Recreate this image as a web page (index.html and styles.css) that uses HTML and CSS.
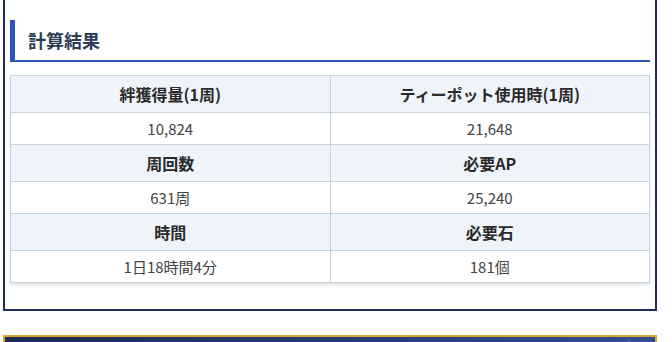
FILE: index.html
```html
<!DOCTYPE html>
<html lang="ja">
<head>
<meta charset="utf-8">
<link rel="stylesheet" href="styles.css">
</head>
<body>
<section class="panel">
  <h2 class="panel-title">計算結果</h2>
  <table class="result">
    <tr class="head"><th>絆獲得量(1周)</th><th>ティーポット使用時(1周)</th></tr>
    <tr class="val"><td>10,824</td><td>21,648</td></tr>
    <tr class="head"><th>周回数</th><th>必要AP</th></tr>
    <tr class="val"><td>631周</td><td>25,240</td></tr>
    <tr class="head"><th>時間</th><th>必要石</th></tr>
    <tr class="val"><td>1日18時間4分</td><td>181個</td></tr>
  </table>
</section>
<div class="next-bar"><span class="deco"></span></div>
</body>
</html>
```
FILE: styles.css
```css
html, body {
  margin: 0;
  padding: 0;
  background: #ffffff;
}
body {
  font-family: "Noto Sans CJK JP", "Noto Sans", sans-serif;
  padding: 0 15px 0 3px;
}
.panel {
  width: 654px;
  box-sizing: border-box;
  border: 2px solid #1f2d5a;
  border-top: none;
  padding: 20px 5px 26px;
}
.panel-title {
  margin: 0;
  height: 40px;
  line-height: 40px;
  border-left: 5px solid #2c55b6;
  border-bottom: 2px solid #2c55b6;
  padding-left: 13px;
  font-size: 18px;
  font-weight: 700;
  color: #2d3d56;
}
.result {
  margin-top: 13px;
  width: 640px;
  border-collapse: collapse;
  table-layout: fixed;
  box-shadow: 0 2px 3px rgba(0, 0, 0, 0.12);
}
.result th, .result td {
  border: 1px solid #c6d4e0;
  text-align: center;
}
.result th {
  background: #eff4fb;
  font-size: 16px;
  font-weight: 700;
  color: #2a2a2a;
  line-height: 24px;
  padding: 6px 8px;
}
.result td {
  background: #ffffff;
  font-size: 15px;
  font-weight: 400;
  color: #444444;
  line-height: 23px;
  padding: 4px 8px;
}
.next-bar {
  position: relative;
  margin-top: 24px;
  width: 654px;
  height: 30px;
  box-sizing: border-box;
  border: 2px solid #d5a72c;
  background: linear-gradient(90deg, #1c2a55 0%, #27407c 60%, #30508f 100%);
  overflow: hidden;
}
.deco {
  position: absolute;
  left: 612px;
  top: 2px;
  width: 0;
  height: 0;
  border-left: 12px solid transparent;
  border-right: 12px solid transparent;
  border-bottom: 20px solid rgba(255, 255, 255, 0.15);
}
```
